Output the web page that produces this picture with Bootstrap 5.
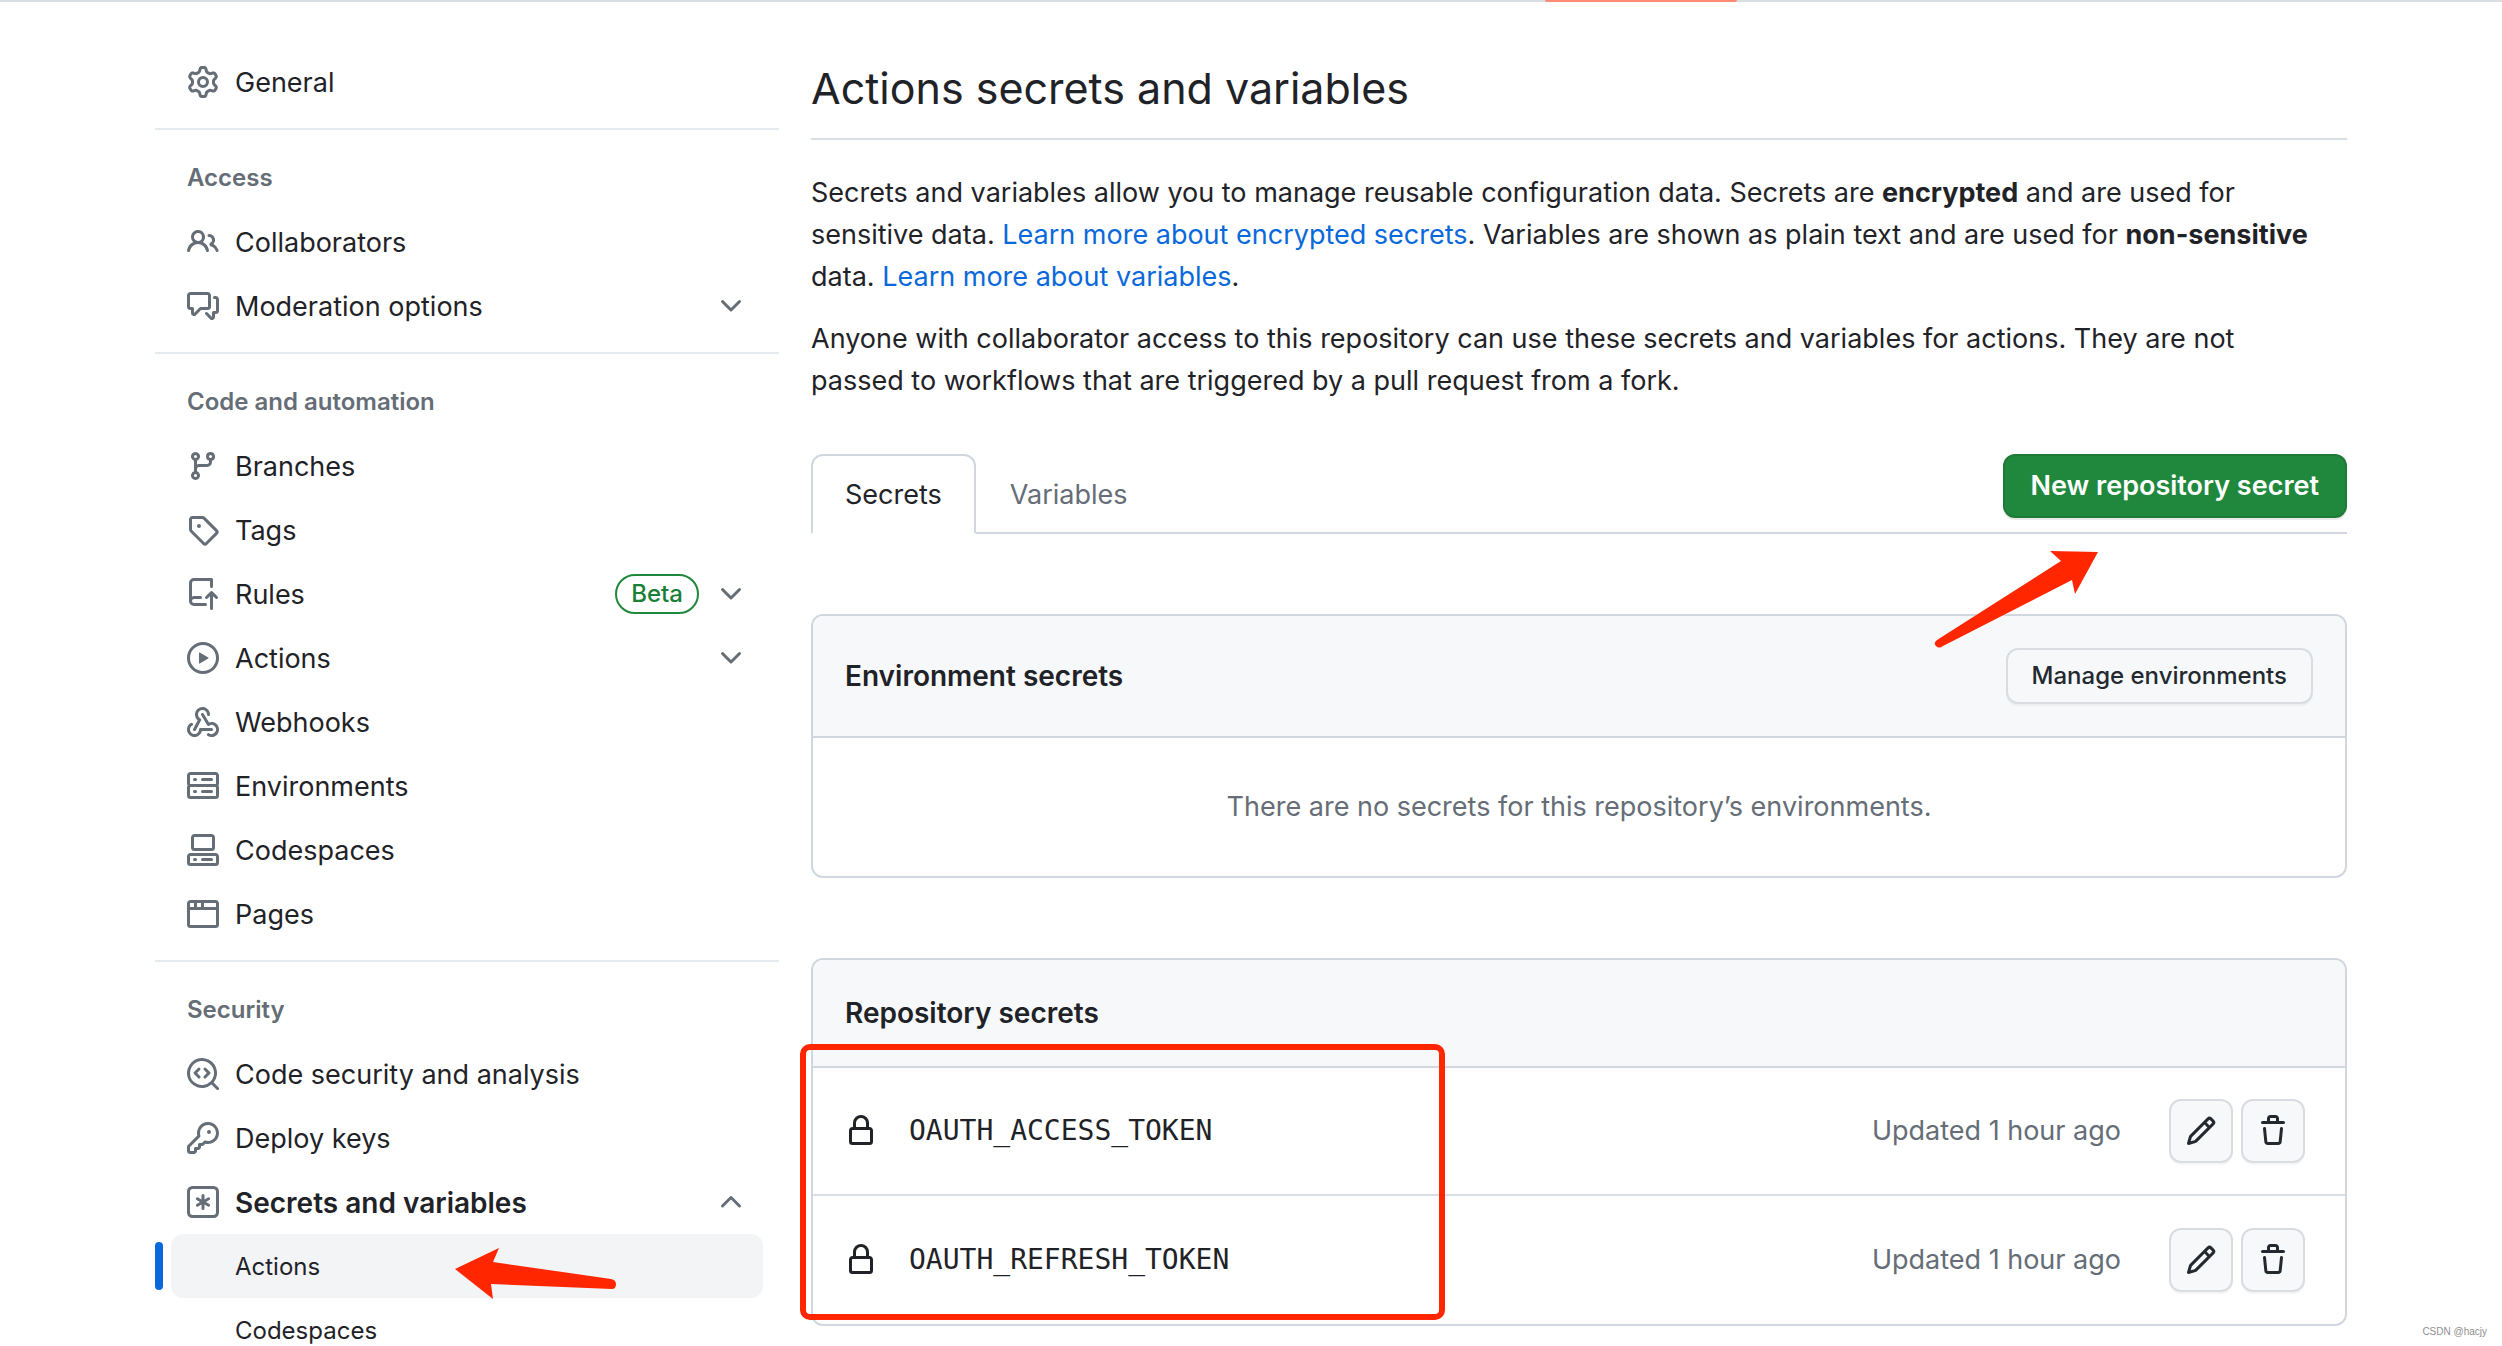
<!DOCTYPE html>
<html lang="en">
<head>
<meta charset="utf-8">
<meta name="viewport" content="width=device-width, initial-scale=1">
<title>Actions secrets and variables</title>
<link rel="stylesheet" href="https://cdn.jsdelivr.net/npm/bootstrap@5.3.0/dist/css/bootstrap.min.css">
<style>
  :root { --fg:#1f2328; --muted:#656d76; --line:#d0d7de; --line-soft:#d8dee4; --accent:#0969da; --note:#ff2600; }
  html { scrollbar-width:none; }
  body { font-family:Inter,"Liberation Sans",sans-serif; font-size:27px; line-height:42px; color:var(--fg); background:#fff; }
  .viewport { overflow:hidden; height:100vh; }
  a { text-decoration:none; color:var(--accent); }
  .oct { width:32px; height:32px; fill:currentColor; flex:none; }
  .tabstrip { height:2px; background:var(--line-soft); }
  .tabstrip-on { width:192px; height:2px; margin-left:1545px; background:#fd8c73; border-radius:0 0 2px 2px; }
  .page { padding:48px 155px 0; gap:32px; }
  .side { flex:0 0 624px; }
  .side hr { margin:14px 0 16px; border-top:2px solid #e6ebf0; opacity:1; }
  .side h2 { font-size:24px; line-height:64px; font-weight:600; color:var(--muted); margin:0; padding-left:32px; }
  .side-row { height:64px; margin:0 16px; padding:2px 16px 0; gap:16px; border:0; border-radius:12px; background:none; color:var(--fg); text-align:left; }
  .side-row > .oct { color:var(--muted); margin-top:-2px; }
  .side button.side-row { width:calc(100% - 32px); }
  .side-open { font-size:28px; font-weight:600; }
  .side-sub { padding-left:64px; font-size:24px; }
  .side li { position:relative; }
  .side-current { background:#f3f4f6; }
  .side-current::before { content:""; position:absolute; left:0; top:8px; width:8px; height:48px; border-radius:6px; background:var(--accent); }
  .beta { border:2px solid #1f883d; color:#1a7f37; border-radius:40px; font-size:24px; line-height:36px; font-weight:500; padding:0 14px; margin-top:-2px; }
  h1 { font-size:43px; line-height:72px; font-weight:400; margin:0 0 32px; padding:2px 0 14px; border-bottom:2px solid var(--line-soft); }
  .intro { padding-right:20px; }
  .intro p { margin-bottom:20px; }
  .tabs-bar { margin-top:52px; margin-bottom:80px; height:80px; border-bottom:2px solid var(--line); }
  .tabs-bar .nav-link { height:80px; padding:2px 32px 0; border:2px solid transparent; border-radius:12px 12px 0 0; color:var(--muted); display:flex; align-items:center; }
  .tabs-bar .nav-link.active { color:var(--fg); background:#fff; border-color:var(--line) var(--line) #fff; }
  .btn { --bs-btn-border-width:2px; border-radius:12px; }
  .btn-new { height:64px; padding:0 26px; font-size:27px; font-weight:600; line-height:60px; color:#fff; background:#1f883d; border-color:#1f7a38; box-shadow:0 2px 0 rgba(31,35,40,.1); }
  .btn-plain { color:#24292f; background:#f6f8fa; border-color:#d9dce0; box-shadow:0 2px 0 rgba(31,35,40,.04); }
  .btn-env { height:56px; padding:0 24px; font-size:24px; font-weight:500; line-height:52px; }
  .btn-sq { width:64px; height:64px; padding:0; }
  .panel { border:2px solid var(--line); border-radius:12px; margin-bottom:80px; }
  .panel-top { background:#f6f8fa; border-bottom:2px solid var(--line); border-radius:10px 10px 0 0; padding:32px; }
  .panel-top h2 { font-size:28px; line-height:42px; font-weight:600; margin:0; }
  .panel-empty { height:138px; color:var(--muted); }
  .secret { height:126px; padding:0 40px 0 32px; }
  .secret + .secret { height:130px; border-top:2px solid var(--line-soft); }
  .secret code { font-family:"DejaVu Sans Mono",monospace; font-size:28px; color:var(--fg); margin-left:32px; }
  .secret-when { color:var(--muted); margin-right:48px; }
  .note { position:absolute; left:0; top:0; pointer-events:none; fill:var(--note); }
  .note-frame { position:absolute; left:800px; top:1044px; width:645px; height:276px; border:6px solid var(--note); border-radius:10px; pointer-events:none; }
  .sig { position:absolute; right:15px; bottom:6px; font-family:"Liberation Sans",sans-serif; font-size:10px; line-height:16px; color:#8f8f8f; }
</style>
<script src="https://cdn.jsdelivr.net/npm/bootstrap@5.3.0/dist/js/bootstrap.bundle.min.js"></script>
</head>
<body>
<svg class="d-none" xmlns="http://www.w3.org/2000/svg">
  <symbol id="gear" viewBox="0 0 16 16"><path d="M8 0a8.2 8.2 0 0 1 .701.031C9.444.095 9.99.645 10.16 1.29l.288 1.107c.018.066.079.158.212.224.231.114.454.243.668.386.123.082.233.09.299.071l1.103-.303c.644-.176 1.392.021 1.82.63.27.385.506.792.704 1.218.315.675.111 1.422-.364 1.891l-.814.806c-.049.048-.098.147-.088.294.016.257.016.515 0 .772-.01.147.038.246.088.294l.814.806c.475.469.679 1.216.364 1.891a7.977 7.977 0 0 1-.704 1.217c-.428.61-1.176.807-1.82.63l-1.102-.302c-.067-.019-.177-.011-.3.071a5.909 5.909 0 0 1-.668.386c-.133.066-.194.158-.211.224l-.29 1.106c-.168.646-.715 1.196-1.458 1.26a8.006 8.006 0 0 1-1.402 0c-.743-.064-1.289-.614-1.458-1.26l-.289-1.106c-.018-.066-.079-.158-.212-.224a5.738 5.738 0 0 1-.668-.386c-.123-.082-.233-.09-.299-.071l-1.103.303c-.644.176-1.392-.021-1.82-.63a8.12 8.12 0 0 1-.704-1.218c-.315-.675-.111-1.422.363-1.891l.815-.806c.05-.048.098-.147.088-.294a6.214 6.214 0 0 1 0-.772c.01-.147-.038-.246-.088-.294l-.815-.806C.635 6.045.431 5.298.746 4.623a7.92 7.92 0 0 1 .704-1.217c.428-.61 1.176-.807 1.82-.63l1.102.302c.067.019.177.011.3-.071.214-.143.437-.272.668-.386.133-.066.194-.158.211-.224l.29-1.106C6.009.645 6.556.095 7.299.03 7.53.01 7.764 0 8 0Zm-.571 1.525c-.036.003-.108.036-.137.146l-.289 1.105c-.147.561-.549.967-.998 1.189-.173.086-.34.183-.5.29-.417.278-.97.423-1.529.27l-1.103-.303c-.109-.03-.175.016-.195.045-.22.312-.412.644-.573.99-.014.031-.021.11.059.19l.815.806c.411.406.562.957.53 1.456a4.709 4.709 0 0 0 0 .582c.032.499-.119 1.05-.53 1.456l-.815.806c-.081.08-.073.159-.059.19.162.346.353.677.573.989.02.03.085.076.195.046l1.102-.303c.56-.153 1.113-.008 1.53.27.161.107.328.204.501.29.447.222.85.629.997 1.189l.289 1.105c.029.109.101.143.137.146a6.6 6.6 0 0 0 1.142 0c.036-.003.108-.036.137-.146l.289-1.105c.147-.561.549-.967.998-1.189.173-.086.34-.183.5-.29.417-.278.97-.423 1.529-.27l1.103.303c.109.029.175-.016.195-.045.22-.313.411-.644.573-.99.014-.031.021-.11-.059-.19l-.815-.806c-.411-.406-.562-.957-.53-1.456a4.709 4.709 0 0 0 0-.582c-.032-.499.119-1.05.53-1.456l.815-.806c.081-.08.073-.159.059-.19a6.464 6.464 0 0 0-.573-.989c-.02-.03-.085-.076-.195-.046l-1.102.303c-.56.153-1.113.008-1.53-.27a4.44 4.44 0 0 0-.501-.29c-.447-.222-.85-.629-.997-1.189l-.289-1.105c-.029-.11-.101-.143-.137-.146a6.6 6.6 0 0 0-1.142 0ZM11 8a3 3 0 1 1-6 0 3 3 0 0 1 6 0ZM9.5 8a1.5 1.5 0 1 0-3.001.001A1.5 1.5 0 0 0 9.5 8Z"/></symbol>
  <symbol id="people" viewBox="0 0 16 16"><path d="M2 5.5a3.5 3.5 0 1 1 5.898 2.549 5.508 5.508 0 0 1 3.034 4.084.75.75 0 1 1-1.482.235 4 4 0 0 0-7.9 0 .75.75 0 0 1-1.482-.236A5.507 5.507 0 0 1 3.102 8.05 3.493 3.493 0 0 1 2 5.5ZM11 4a3.001 3.001 0 0 1 2.22 5.018 5.01 5.01 0 0 1 2.56 3.012.749.749 0 0 1-.885.954.752.752 0 0 1-.549-.514 3.507 3.507 0 0 0-2.522-2.372.75.75 0 0 1-.574-.73v-.352a.75.75 0 0 1 .416-.672A1.5 1.5 0 0 0 11 5.5.75.75 0 0 1 11 4Zm-5.5-.5a2 2 0 1 0-.001 3.999A2 2 0 0 0 5.5 3.5Z"/></symbol>
  <symbol id="discuss" viewBox="0 0 16 16"><path d="M1.75 1h8.5c.966 0 1.75.784 1.75 1.75v5.5A1.75 1.75 0 0 1 10.25 10H7.061l-2.574 2.573A1.458 1.458 0 0 1 2 11.543V10h-.25A1.75 1.75 0 0 1 0 8.25v-5.5C0 1.784.784 1 1.75 1ZM1.5 2.75v5.5c0 .138.112.25.25.25h1a.75.75 0 0 1 .75.75v2.19l2.72-2.72a.749.749 0 0 1 .53-.22h3.5a.25.25 0 0 0 .25-.25v-5.5a.25.25 0 0 0-.25-.25h-8.5a.25.25 0 0 0-.25.25Zm13 2a.25.25 0 0 0-.25-.25h-.5a.75.75 0 0 1 0-1.5h.5c.966 0 1.75.784 1.75 1.75v5.5A1.75 1.75 0 0 1 14.25 12H14v1.543a1.458 1.458 0 0 1-2.487 1.03L9.22 12.28a.749.749 0 0 1 .326-1.275.749.749 0 0 1 .734.215l2.22 2.22v-2.19a.75.75 0 0 1 .75-.75h1a.25.25 0 0 0 .25-.25Z"/></symbol>
  <symbol id="branch" viewBox="0 0 16 16"><path d="M9.5 3.25a2.25 2.25 0 1 1 3 2.122V6A2.5 2.5 0 0 1 10 8.5H6a1 1 0 0 0-1 1v1.128a2.251 2.251 0 1 1-1.5 0V5.372a2.25 2.25 0 1 1 1.5 0v1.836A2.493 2.493 0 0 1 6 7h4a1 1 0 0 0 1-1v-.628A2.25 2.25 0 0 1 9.5 3.25Zm-6 0a.75.75 0 1 0 1.5 0 .75.75 0 0 0-1.5 0Zm8.25-.75a.75.75 0 1 0 0 1.5.75.75 0 0 0 0-1.5ZM4.25 12a.75.75 0 1 0 0 1.5.75.75 0 0 0 0-1.5Z"/></symbol>
  <symbol id="tag" viewBox="0 0 16 16"><path d="M1 7.775V2.75C1 1.784 1.784 1 2.75 1h5.025c.464 0 .91.184 1.238.513l6.25 6.25a1.75 1.75 0 0 1 0 2.474l-5.026 5.026a1.75 1.75 0 0 1-2.474 0l-6.25-6.25A1.752 1.752 0 0 1 1 7.775Zm1.5 0c0 .066.026.13.073.177l6.25 6.25a.25.25 0 0 0 .354 0l5.025-5.025a.25.25 0 0 0 0-.354l-6.25-6.25a.25.25 0 0 0-.177-.073H2.75a.25.25 0 0 0-.25.25ZM6 5a1 1 0 1 1 0 2 1 1 0 0 1 0-2Z"/></symbol>
  <symbol id="push" viewBox="0 0 16 16"><path d="M1 2.5A2.5 2.5 0 0 1 3.5 0h8.75a.75.75 0 0 1 .75.75v3.5a.75.75 0 0 1-1.5 0V1.5h-8a1 1 0 0 0-1 1v6.708A2.493 2.493 0 0 1 3.5 9h3.25a.75.75 0 0 1 0 1.5H3.5a1 1 0 0 0 0 2h5.75a.75.75 0 0 1 0 1.5H3.5A2.5 2.5 0 0 1 1 11.5Zm13.23 7.79h-.001l-1.224-1.224v6.184a.75.75 0 0 1-1.5 0V9.066L10.28 10.29a.75.75 0 0 1-1.06-1.061l2.505-2.504a.75.75 0 0 1 1.06 0L15.29 9.23a.751.751 0 0 1-.018 1.042.751.751 0 0 1-1.042.018Z"/></symbol>
  <symbol id="play" viewBox="0 0 16 16"><path d="M8 0a8 8 0 1 1 0 16A8 8 0 0 1 8 0ZM1.5 8a6.5 6.5 0 1 0 13 0 6.5 6.5 0 0 0-13 0Zm4.879-2.773 4.264 2.559a.25.25 0 0 1 0 .428l-4.264 2.559A.25.25 0 0 1 6 10.559V5.442a.25.25 0 0 1 .379-.215Z"/></symbol>
  <symbol id="hook" viewBox="0 0 16 16"><path d="M5.5 4.25a2.25 2.25 0 0 1 4.5 0 .75.75 0 0 0 1.5 0 3.75 3.75 0 1 0-6.14 2.889l-2.272 4.258a.75.75 0 0 0 1.324.706L7 7.25a.75.75 0 0 0-.309-1.015A2.25 2.25 0 0 1 5.5 4.25Z"/><path d="M7.364 3.607a.75.75 0 0 1 1.03.257l2.608 4.349a3.75 3.75 0 1 1-.628 6.785.75.75 0 0 1 .752-1.299 2.25 2.25 0 1 0-.033-3.88.75.75 0 0 1-1.03-.256L7.107 4.636a.75.75 0 0 1 .257-1.03Z"/><path d="M2.9 8.776A.75.75 0 0 1 2.625 9.8 2.25 2.25 0 1 0 6 11.75a.75.75 0 0 1 .75-.751h5.5a.75.75 0 0 1 0 1.5H7.425a3.751 3.751 0 1 1-5.55-3.998.75.75 0 0 1 1.024.274Z"/></symbol>
  <symbol id="server" viewBox="0 0 16 16"><path d="M1.75 1h12.5c.966 0 1.75.784 1.75 1.75v4c0 .372-.116.717-.314 1 .198.283.314.628.314 1v4a1.75 1.75 0 0 1-1.75 1.75H1.75A1.75 1.75 0 0 1 0 12.75v-4c0-.358.109-.707.314-1a1.739 1.739 0 0 1-.314-1v-4C0 1.784.784 1 1.75 1ZM1.5 2.75v4c0 .138.112.25.25.25h12.5a.25.25 0 0 0 .25-.25v-4a.25.25 0 0 0-.25-.25H1.75a.25.25 0 0 0-.25.25Zm.25 5.75a.25.25 0 0 0-.25.25v4c0 .138.112.25.25.25h12.5a.25.25 0 0 0 .25-.25v-4a.25.25 0 0 0-.25-.25ZM7 4.75A.75.75 0 0 1 7.75 4h4.5a.75.75 0 0 1 0 1.5h-4.5A.75.75 0 0 1 7 4.75ZM7.75 10h4.5a.75.75 0 0 1 0 1.5h-4.5a.75.75 0 0 1 0-1.5ZM3 4.75A.75.75 0 0 1 3.75 4h.5a.75.75 0 0 1 0 1.5h-.5A.75.75 0 0 1 3 4.75ZM3.75 10h.5a.75.75 0 0 1 0 1.5h-.5a.75.75 0 0 1 0-1.5Z"/></symbol>
  <symbol id="space" viewBox="0 0 16 16"><path d="M0 11.25c0-.966.784-1.75 1.75-1.75h12.5c.966 0 1.75.784 1.75 1.75v3A1.75 1.75 0 0 1 14.25 16H1.75A1.75 1.75 0 0 1 0 14.25Zm2-9.5C2 .784 2.784 0 3.75 0h8.5C13.216 0 14 .784 14 1.75v5a1.75 1.75 0 0 1-1.75 1.75h-8.5A1.75 1.75 0 0 1 2 6.75Zm1.75-.25a.25.25 0 0 0-.25.25v5c0 .138.112.25.25.25h8.5a.25.25 0 0 0 .25-.25v-5a.25.25 0 0 0-.25-.25Zm-2 9.5a.25.25 0 0 0-.25.25v3c0 .138.112.25.25.25h12.5a.25.25 0 0 0 .25-.25v-3a.25.25 0 0 0-.25-.25Z"/><path d="M7 12.75a.75.75 0 0 1 .75-.75h4.5a.75.75 0 0 1 0 1.5h-4.5a.75.75 0 0 1-.75-.75Zm-4 0a.75.75 0 0 1 .75-.75h.5a.75.75 0 0 1 0 1.5h-.5a.75.75 0 0 1-.75-.75Z"/></symbol>
  <symbol id="browser" viewBox="0 0 16 16"><path d="M0 2.75C0 1.784.784 1 1.75 1h12.5c.966 0 1.75.784 1.75 1.75v10.5A1.75 1.75 0 0 1 14.25 15H1.75A1.75 1.75 0 0 1 0 13.25ZM14.5 6h-13v7.25c0 .138.112.25.25.25h12.5a.25.25 0 0 0 .25-.25Zm-6-3.5v2h6V2.75a.25.25 0 0 0-.25-.25ZM5 2.5v2h2v-2Zm-3.25 0a.25.25 0 0 0-.25.25V4.5h2v-2Z"/></symbol>
  <symbol id="scan" viewBox="0 0 16 16"><path d="M8.47 4.97a.75.75 0 0 0 0 1.06L9.94 7.5 8.47 8.97a.75.75 0 1 0 1.06 1.06l2-2a.75.75 0 0 0 0-1.06l-2-2a.75.75 0 0 0-1.06 0ZM6.53 6.03a.75.75 0 0 0-1.06-1.06l-2 2a.75.75 0 0 0 0 1.06l2 2a.75.75 0 1 0 1.06-1.06L5.06 7.5l1.47-1.47Z"/><path d="M12.246 13.307a7.501 7.501 0 1 1 1.06-1.06l2.474 2.473a.749.749 0 0 1-.326 1.275.749.749 0 0 1-.734-.215ZM1.5 7.5a6.002 6.002 0 0 0 3.608 5.504 6.002 6.002 0 0 0 6.486-1.117.748.748 0 0 1 .292-.293A6 6 0 1 0 1.5 7.5Z"/></symbol>
  <symbol id="key" viewBox="0 0 16 16"><path d="M10.5 0a5.499 5.499 0 1 1-1.288 10.848l-.932.932a.749.749 0 0 1-.53.22H7v.75a.749.749 0 0 1-.22.53l-.5.5a.749.749 0 0 1-.53.22H5v.75a.749.749 0 0 1-.22.53l-.5.5a.749.749 0 0 1-.53.22h-2A1.75 1.75 0 0 1 0 14.25v-2c0-.199.079-.389.22-.53l4.932-4.932A5.5 5.5 0 0 1 10.5 0Zm-4 5.5c-.001.431.069.86.205 1.269a.75.75 0 0 1-.181.768L1.5 12.56v1.69c0 .138.112.25.25.25h1.69l.06-.06v-1.19a.75.75 0 0 1 .75-.75h1.19l.06-.06v-1.19a.75.75 0 0 1 .75-.75h1.19l1.023-1.025a.75.75 0 0 1 .768-.18A4 4 0 1 0 6.5 5.5ZM11 6a1 1 0 1 1 0-2 1 1 0 0 1 0 2Z"/></symbol>
  <symbol id="asterisk" viewBox="0 0 16 16"><path d="M0 2.75A2.75 2.75 0 0 1 2.75 0h10.5A2.75 2.75 0 0 1 16 2.75v10.5A2.75 2.75 0 0 1 13.25 16H2.75A2.75 2.75 0 0 1 0 13.25ZM2.75 1.5c-.69 0-1.25.56-1.25 1.25v10.5c0 .69.56 1.25 1.25 1.25h10.5c.69 0 1.25-.56 1.25-1.25V2.75c0-.69-.56-1.25-1.25-1.25Z"/><path d="M8 4a.75.75 0 0 1 .75.75V6.7l1.69-.975a.75.75 0 0 1 .75 1.3L9.5 8l1.69.976a.75.75 0 0 1-.75 1.298L8.75 9.3v1.951a.75.75 0 0 1-1.5 0V9.299l-1.69.976a.75.75 0 0 1-.75-1.3L6.5 8l-1.69-.975a.75.75 0 0 1 .75-1.3l1.69.976V4.75A.75.75 0 0 1 8 4Z"/></symbol>
  <symbol id="lock" viewBox="0 0 16 16"><path d="M4 4a4 4 0 0 1 8 0v2h.25c.966 0 1.75.784 1.75 1.75v5.5A1.75 1.75 0 0 1 12.25 15h-8.5A1.75 1.75 0 0 1 2 13.25v-5.5C2 6.784 2.784 6 3.75 6H4Zm8.25 3.5h-8.5a.25.25 0 0 0-.25.25v5.5c0 .138.112.25.25.25h8.5a.25.25 0 0 0 .25-.25v-5.5a.25.25 0 0 0-.25-.25ZM10.5 6V4a2.5 2.5 0 1 0-5 0v2Z"/></symbol>
  <symbol id="pencil" viewBox="0 0 16 16"><path d="M11.013 1.427a1.75 1.75 0 0 1 2.474 0l1.086 1.086a1.75 1.75 0 0 1 0 2.474l-8.61 8.61c-.21.21-.47.364-.756.445l-3.251.93a.75.75 0 0 1-.927-.928l.929-3.25c.081-.286.235-.547.445-.758l8.61-8.61Zm.176 4.823L9.75 4.81l-6.286 6.287a.253.253 0 0 0-.064.108l-.558 1.953 1.953-.558a.253.253 0 0 0 .108-.064Zm1.238-3.763a.25.25 0 0 0-.354 0L10.811 3.75l1.439 1.44 1.263-1.263a.25.25 0 0 0 0-.354Z"/></symbol>
  <symbol id="trash" viewBox="0 0 16 16"><path d="M11 1.75V3h2.25a.75.75 0 0 1 0 1.5H2.75a.75.75 0 0 1 0-1.5H5V1.75C5 .784 5.784 0 6.75 0h2.5C10.216 0 11 .784 11 1.75ZM4.496 6.675l.66 6.6a.25.25 0 0 0 .249.225h5.19a.25.25 0 0 0 .249-.225l.66-6.6a.75.75 0 0 1 1.492.149l-.66 6.6A1.748 1.748 0 0 1 10.595 15h-5.19a1.75 1.75 0 0 1-1.741-1.575l-.66-6.6a.75.75 0 1 1 1.492-.15ZM6.5 1.75V3h3V1.75a.25.25 0 0 0-.25-.25h-2.5a.25.25 0 0 0-.25.25Z"/></symbol>
  <symbol id="down" viewBox="0 0 16 16"><path d="M12.78 5.22a.749.749 0 0 1 0 1.06l-4.25 4.25a.749.749 0 0 1-1.06 0L3.22 6.28a.749.749 0 1 1 1.06-1.06L8 8.939l3.72-3.719a.749.749 0 0 1 1.06 0Z"/></symbol>
  <symbol id="up" viewBox="0 0 16 16"><path d="M3.22 10.53a.749.749 0 0 1 0-1.06l4.25-4.25a.749.749 0 0 1 1.06 0l4.25 4.25a.749.749 0 1 1-1.06 1.06L8 6.811 4.28 10.53a.749.749 0 0 1-1.06 0Z"/></symbol>
</svg>

<div class="viewport position-relative">
  <div class="tabstrip"><div class="tabstrip-on"></div></div>
  <div class="page d-flex align-items-start">

    <nav class="side" aria-label="Repository settings">
      <ul class="list-unstyled m-0">
        <li><a href="#" class="side-row d-flex align-items-center"><svg class="oct"><use href="#gear"/></svg>General</a></li>
      </ul>
      <hr>
      <h2>Access</h2>
      <ul class="list-unstyled m-0">
        <li><a href="#" class="side-row d-flex align-items-center"><svg class="oct"><use href="#people"/></svg>Collaborators</a></li>
        <li><button type="button" class="side-row d-flex align-items-center"><svg class="oct"><use href="#discuss"/></svg><span class="flex-grow-1">Moderation options</span><svg class="oct"><use href="#down"/></svg></button></li>
      </ul>
      <hr>
      <h2>Code and automation</h2>
      <ul class="list-unstyled m-0">
        <li><a href="#" class="side-row d-flex align-items-center"><svg class="oct"><use href="#branch"/></svg>Branches</a></li>
        <li><a href="#" class="side-row d-flex align-items-center"><svg class="oct"><use href="#tag"/></svg>Tags</a></li>
        <li><button type="button" class="side-row d-flex align-items-center"><svg class="oct"><use href="#push"/></svg><span class="flex-grow-1">Rules</span><span class="beta">Beta</span><svg class="oct"><use href="#down"/></svg></button></li>
        <li><button type="button" class="side-row d-flex align-items-center"><svg class="oct"><use href="#play"/></svg><span class="flex-grow-1">Actions</span><svg class="oct"><use href="#down"/></svg></button></li>
        <li><a href="#" class="side-row d-flex align-items-center"><svg class="oct"><use href="#hook"/></svg>Webhooks</a></li>
        <li><a href="#" class="side-row d-flex align-items-center"><svg class="oct"><use href="#server"/></svg>Environments</a></li>
        <li><a href="#" class="side-row d-flex align-items-center"><svg class="oct"><use href="#space"/></svg>Codespaces</a></li>
        <li><a href="#" class="side-row d-flex align-items-center"><svg class="oct"><use href="#browser"/></svg>Pages</a></li>
      </ul>
      <hr>
      <h2>Security</h2>
      <ul class="list-unstyled m-0">
        <li><a href="#" class="side-row d-flex align-items-center"><svg class="oct"><use href="#scan"/></svg>Code security and analysis</a></li>
        <li><a href="#" class="side-row d-flex align-items-center"><svg class="oct"><use href="#key"/></svg>Deploy keys</a></li>
        <li><button type="button" class="side-row side-open d-flex align-items-center"><svg class="oct"><use href="#asterisk"/></svg><span class="flex-grow-1">Secrets and variables</span><svg class="oct"><use href="#up"/></svg></button></li>
        <li><a href="#" aria-current="page" class="side-row side-sub side-current d-flex align-items-center">Actions</a></li>
        <li><a href="#" class="side-row side-sub d-flex align-items-center">Codespaces</a></li>
      </ul>
    </nav>

    <main class="flex-grow-1">
      <h1>Actions secrets and variables</h1>
      <div class="intro">
        <p>Secrets and variables allow you to manage reusable configuration data. Secrets are <strong>encrypted</strong> and are used for sensitive data. <a href="#">Learn more about encrypted secrets</a>. Variables are shown as plain text and are used for <strong>non-sensitive</strong> data. <a href="#">Learn more about variables</a>.</p>
        <p>Anyone with collaborator access to this repository can use these secrets and variables for actions. They are not passed to workflows that are triggered by a pull request from a fork.</p>
      </div>

      <div class="tabs-bar d-flex justify-content-between align-items-start">
        <ul class="nav">
          <li class="nav-item"><a class="nav-link active" aria-current="page" href="#">Secrets</a></li>
          <li class="nav-item"><a class="nav-link" href="#">Variables</a></li>
        </ul>
        <button type="button" class="btn btn-new">New repository secret</button>
      </div>

      <section class="panel">
        <div class="panel-top d-flex justify-content-between align-items-center">
          <h2>Environment secrets</h2>
          <button type="button" class="btn btn-plain btn-env">Manage environments</button>
        </div>
        <div class="panel-empty d-flex justify-content-center align-items-center">There are no secrets for this repository’s environments.</div>
      </section>

      <section class="panel">
        <div class="panel-top"><h2>Repository secrets</h2></div>
        <ul class="list-unstyled m-0">
          <li class="secret d-flex align-items-center">
            <svg class="oct"><use href="#lock"/></svg><code>OAUTH_ACCESS_TOKEN</code>
            <span class="secret-when ms-auto">Updated 1 hour ago</span>
            <span class="d-flex gap-2"><button type="button" class="btn btn-plain btn-sq d-flex align-items-center justify-content-center" aria-label="Edit OAUTH_ACCESS_TOKEN"><svg class="oct"><use href="#pencil"/></svg></button><button type="button" class="btn btn-plain btn-sq d-flex align-items-center justify-content-center" aria-label="Delete OAUTH_ACCESS_TOKEN"><svg class="oct"><use href="#trash"/></svg></button></span>
          </li>
          <li class="secret d-flex align-items-center">
            <svg class="oct"><use href="#lock"/></svg><code>OAUTH_REFRESH_TOKEN</code>
            <span class="secret-when ms-auto">Updated 1 hour ago</span>
            <span class="d-flex gap-2"><button type="button" class="btn btn-plain btn-sq d-flex align-items-center justify-content-center" aria-label="Edit OAUTH_REFRESH_TOKEN"><svg class="oct"><use href="#pencil"/></svg></button><button type="button" class="btn btn-plain btn-sq d-flex align-items-center justify-content-center" aria-label="Delete OAUTH_REFRESH_TOKEN"><svg class="oct"><use href="#trash"/></svg></button></span>
          </li>
        </ul>
      </section>
    </main>
  </div>

  <!-- Hand-drawn call-outs over the page -->
  <svg class="note" width="2200" height="1320" aria-hidden="true">
    <path d="M2098 552 2050 551 2061 561 1937 640Q1933 643 1936 646 1939 649 1943 646L2072 580 2075 594Z"/>
    <path d="M455 1269 499 1248 493 1262 611 1279Q616 1280 616 1284 616 1289 612 1289L491 1284 493 1299Z"/>
  </svg>
  <div class="note-frame"></div>
  <div class="sig">CSDN @hacjy</div>
</div>
</body>
</html>
